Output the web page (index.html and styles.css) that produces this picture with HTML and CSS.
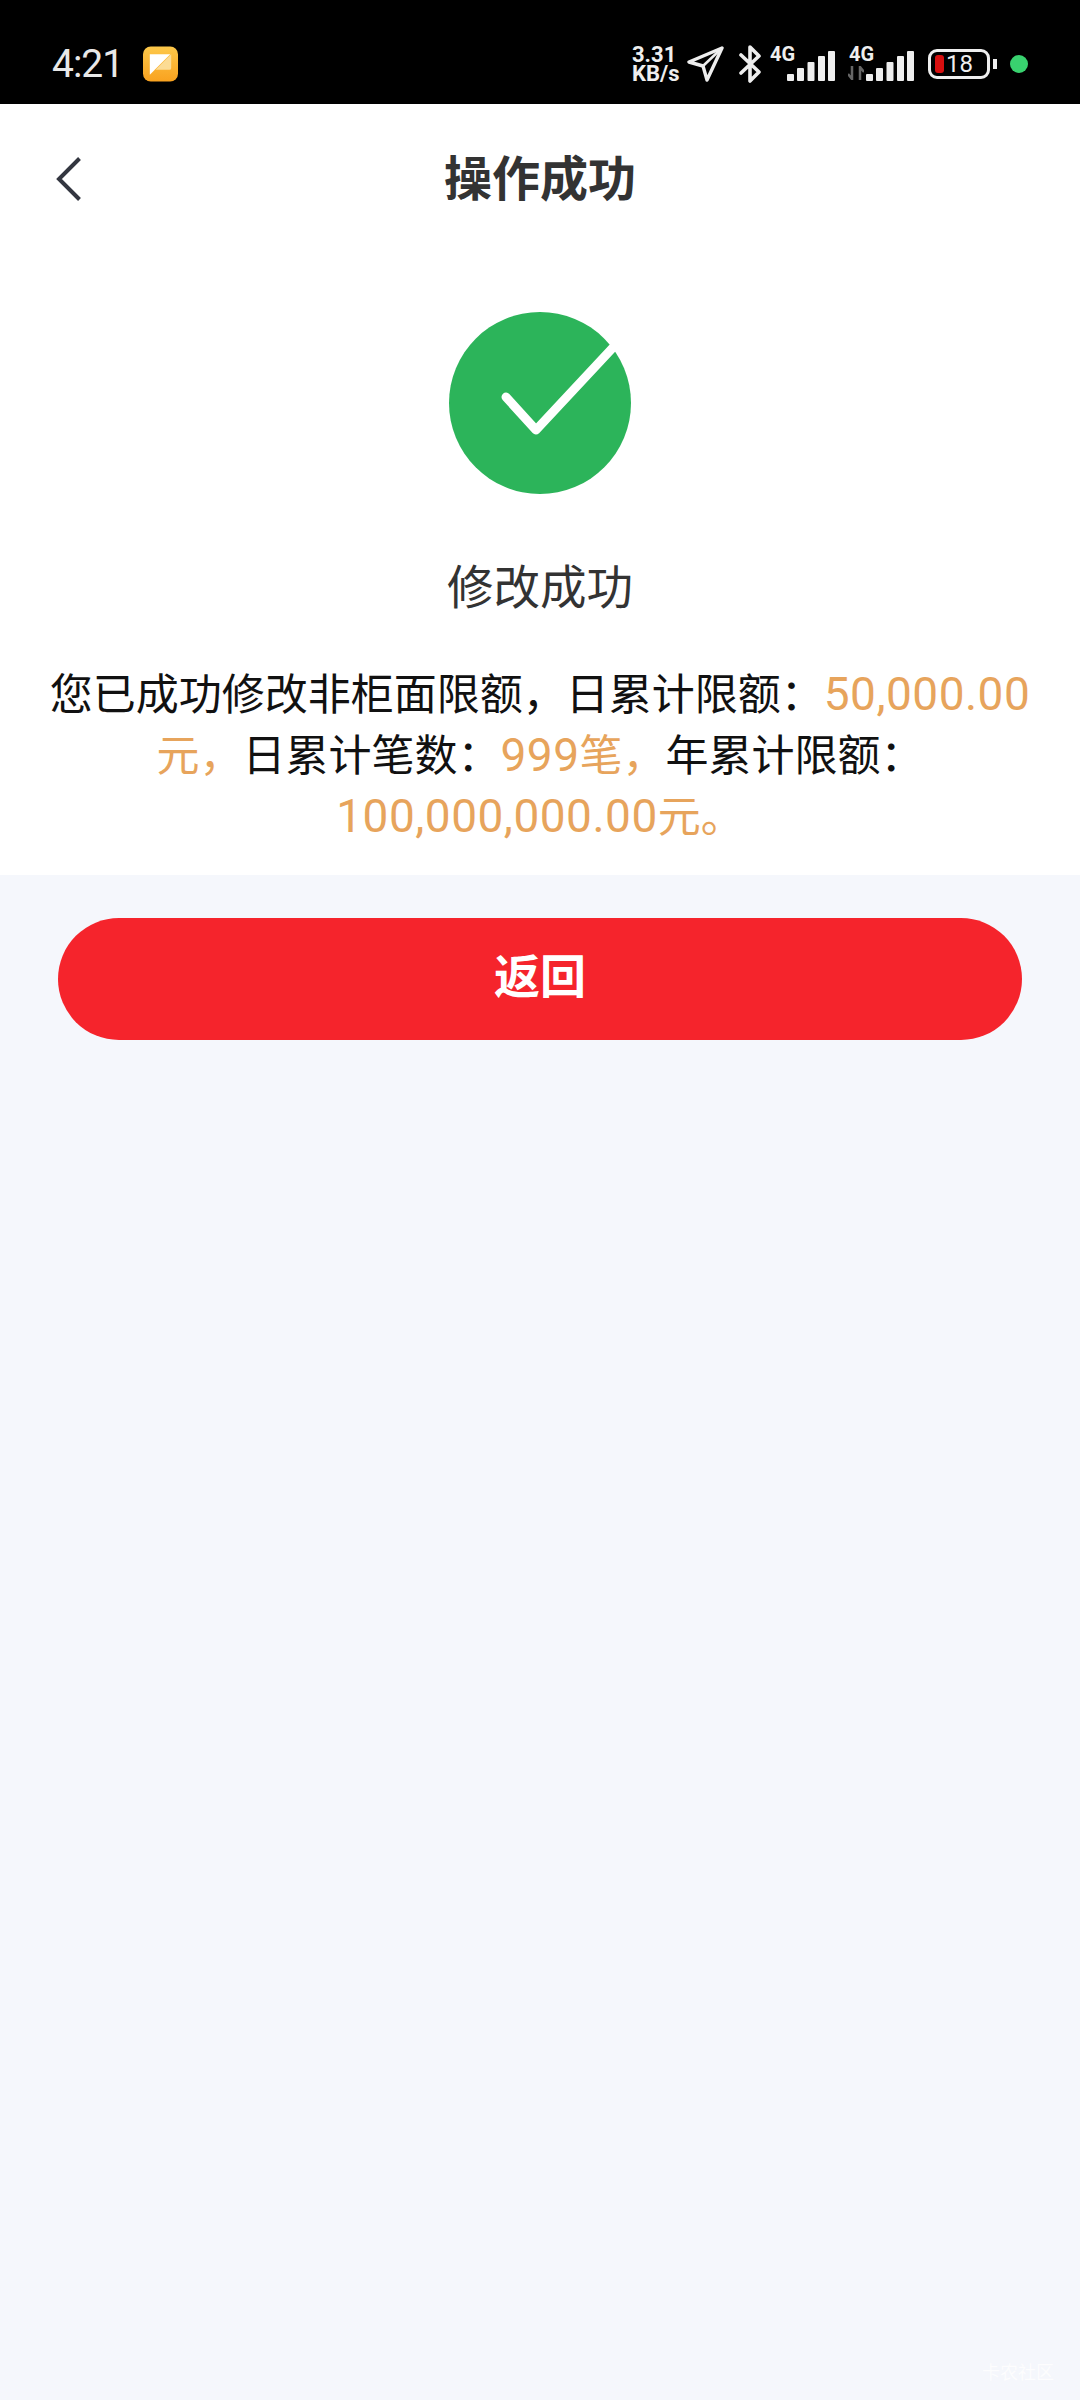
FILE: index.html
```html
<!DOCTYPE html>
<html lang="zh-CN">
<head>
<meta charset="utf-8">
<title>操作成功</title>
<link rel="stylesheet" href="styles.css">
</head>
<body>
<div class="page">
  <header class="status">
    <div class="status-left">
      <span class="time">4:21</span>
      <svg class="app-icon" width="35" height="36" viewBox="0 0 36 36">
        <defs><linearGradient id="ag" x1="0" y1="0" x2="0" y2="1"><stop offset="0" stop-color="#fdc84a"/><stop offset="1" stop-color="#f9a21f"/></linearGradient></defs>
        <rect width="36" height="36" rx="8" fill="url(#ag)"/>
        <path d="M7 8H28L7 29Z" fill="#fff"/>
        <path d="M29 8V22Q29 24 27 24H13Z" fill="#fcdc95"/>
      </svg>
    </div>
    <div class="status-right">
      <div class="speed">3.31<br>KB/s</div>
      <svg class="ic-nav" width="37" height="36" viewBox="0 0 37 36"><path d="M35 2 2 16l14 4 4 14Z" fill="none" stroke="#eee" stroke-width="3.4" stroke-linejoin="round"/><path d="M16 20 35 2" stroke="#eee" stroke-width="2.5"/></svg>
      <svg class="ic-bt" width="24" height="38" viewBox="0 0 24 38"><path d="M3 10 21 27 12 36V2l9 9L3 28" fill="none" stroke="#eee" stroke-width="3.6" stroke-linejoin="round" stroke-linecap="round"/></svg>
      <div class="sig">
        <span class="net">4G</span>
        <svg width="48" height="30" viewBox="0 0 48 30"><g fill="#eee"><rect x="0" y="23" width="7" height="7" rx="1"/><rect x="10" y="17" width="7" height="13" rx="1"/><rect x="20.500" y="11" width="7" height="19" rx="1"/><rect x="31" y="5" width="7" height="25" rx="1"/><rect x="41" y="0" width="7" height="30" rx="1"/></g></svg>
      </div>
      <div class="sig sig-two">
        <span class="net">4G</span>
        <svg class="arrows" width="16" height="14" viewBox="0 0 16 14"><path d="M4 0V13L0 8M12 14V1l4 5" fill="none" stroke="#666" stroke-width="2.500"/></svg>
        <svg width="48" height="30" viewBox="0 0 48 30"><g fill="#eee"><rect x="0" y="23" width="7" height="7" rx="1"/><rect x="10" y="17" width="7" height="13" rx="1"/><rect x="20.500" y="11" width="7" height="19" rx="1"/><rect x="31" y="5" width="7" height="25" rx="1"/><rect x="41" y="0" width="7" height="30" rx="1"/></g></svg>
      </div>
      <div class="battery">
        <div class="batt-body"><i class="batt-level"></i><span>18</span></div>
        <i class="batt-cap"></i>
      </div>
      <i class="dot"></i>
    </div>
  </header>

  <nav class="nav">
    <svg class="back" width="25" height="44" viewBox="0 0 25 44"><path d="M23.500 1.500 3 22l20.500 20.500" fill="none" stroke="#333640" stroke-width="4"/></svg>
    <h1 class="title">操作成功</h1>
  </nav>

  <main class="card">
    <svg class="check" width="196" height="182" viewBox="0 0 196 182">
      <circle cx="91" cy="91" r="91" fill="#2cb45a"/>
      <path d="M57 85 87 118 171 28" fill="none" stroke="#fff" stroke-width="9" stroke-linecap="round" stroke-linejoin="round"/>
    </svg>
    <h2 class="result">修改成功</h2>
    <p class="msg">您已成功修改非柜面限额，日累计限额：<span class="hl"><span class="num">50,000.00</span>元，</span>日累计笔数：<span class="hl"><span class="num">999</span>笔，</span>年累计限额：<span class="hl"><span class="num">100,000,000.00</span>元。</span></p>
  </main>

  <div class="actions">
    <button class="btn">返回</button>
  </div>
  <span class="mark">卡农社区</span>
</div>
</body>
</html>
```

FILE: styles.css
```css
* { box-sizing: border-box; }
html, body { margin: 0; padding: 0; }
body { font-family: "Noto Sans CJK SC", "Noto Sans", sans-serif; background: #f5f7fc; }
.page { position: relative; width: 1080px; height: 2400px; display: flex; flex-direction: column; overflow: hidden; }

.status { height: 104px; background: #000; color: #eee; display: flex; justify-content: space-between; align-items: center; padding: 24px 52px 0 52px; }
.status-left { display: flex; align-items: center; gap: 20px; }
.time { font: 400 39px/1 Roboto, sans-serif; letter-spacing: -1px; color: #e8e8e8; }
.app-icon { display: block; }
.status-right { display: flex; align-items: center; }
.speed { width: 48px; margin-right: 7px; font: 700 22px/19px Roboto, sans-serif; white-space: nowrap; }
.ic-nav { margin-right: 14px; }
.ic-bt { margin-right: 8px; }
.sig { position: relative; width: 65px; height: 34px; display: flex; justify-content: flex-end; align-items: flex-end; margin-right: 14px; }
.sig-two { margin-right: 14px; }
.net { position: absolute; left: 0; top: -3px; font: 700 20px/1 Roboto, sans-serif; }
.arrows { position: absolute; left: -1px; bottom: 1px; }
.battery { display: flex; align-items: center; gap: 3px; margin-right: 13px; }
.batt-body { position: relative; width: 62px; height: 30px; border: 3px solid #eee; border-radius: 9px; display: flex; align-items: center; padding-left: 15px; font: 400 24px/1 Roboto, sans-serif; }
.batt-level { position: absolute; left: 4px; top: 3px; width: 9px; height: 18px; background: #d70f0f; border-radius: 3px; }
.batt-cap { width: 4px; height: 10px; background: #eee; }
.dot { width: 18px; height: 18px; background: #39d26f; border-radius: 50%; }

.nav { position: relative; height: 148px; padding-bottom: 7px; background: #fff; display: flex; align-items: center; justify-content: center; }
.back { position: absolute; left: 56px; top: 53px; }
.title { margin: 0; font-size: 48px; font-weight: 700; color: #333; line-height: 1; }

.card { background: #fff; height: 623px; display: flex; flex-direction: column; align-items: center; padding-top: 60px; }
.check { display: block; margin-left: 14px; }
.result { margin: 60px 0 0; font-size: 46.500px; font-weight: 400; color: #333; line-height: 60px; }
.msg { margin: 47px 0 0; width: 1040px; font-size: 43px; line-height: 61px; color: #111; text-align: center; }
.hl { color: #e7a45c; }
.num { font-family: Roboto, sans-serif; font-size: 46px; line-height: 1; letter-spacing: .5px; }

.actions { padding: 43px 58px 0; }
.btn { width: 100%; height: 122px; padding: 0 0 12px; border: 0; border-radius: 61px; background: #f5242c; color: #fff; font-family: inherit; font-size: 46px; font-weight: 700; }

.mark { position: absolute; right: 26px; top: 2358px; font-size: 18px; color: #fff; opacity: .8; }
```
